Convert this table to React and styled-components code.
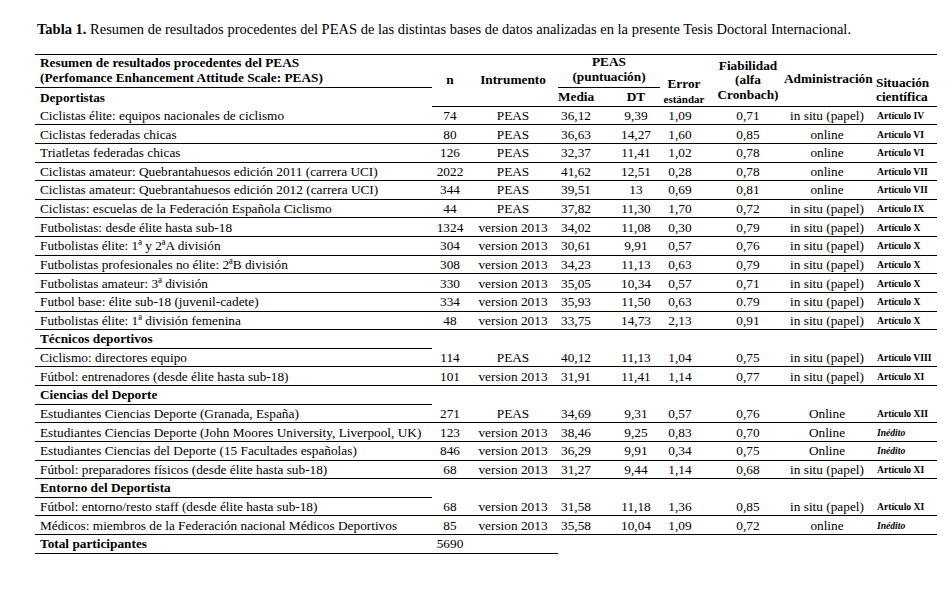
import React from 'react';
import styled, { createGlobalStyle, css } from 'styled-components';

const GlobalStyle = createGlobalStyle`
  html, body {
    margin: 0;
    padding: 0;
    background: #fff;
  }
  body {
    font-family: "Liberation Serif", "Times New Roman", serif;
    color: #000;
  }
`

const Page = styled.div`
  width: 949px;
  height: 603px;
  padding: 21px 0 0 35px;
  box-sizing: border-box;
  font-family: "Liberation Serif", "Times New Roman", serif;
`
const Caption = styled.p`
  margin: 0 0 17px 2px;
  font-size: 14.5px;
  line-height: 16px;
  b {
    font-weight: 700;
  }
`
const Table = styled.table`
  width: 902px;
  border-collapse: collapse;
  table-layout: fixed;
  border-top: 1px solid #000;
  font-family: "Liberation Serif", "Times New Roman", serif;
`
const line = css`border-bottom: 1px solid #000;`

const Th = styled.th`
  padding: 0;
  font-size: 13.3px;
  font-weight: 700;
  line-height: 14.5px;
  text-align: ${p => p.$align || 'center'};
  vertical-align: ${p => p.$valign || 'middle'};
  padding-left: ${p => p.$pl || 0}px;
  padding-right: ${p => p.$pr || 0}px;
  padding-bottom: ${p => p.$pb || 0}px;
  ${p => p.$line && line}
`
const Small = styled.span`
  display: block;
  font-size: 11px;
  line-height: 14px;
`
const Row = styled.tr`
  height: ${p => p.$h || 18.64}px;
`
const Td = styled.td`
  padding: 0;
  font-size: 13.3px;
  line-height: 15px;
  white-space: nowrap;
  text-align: center;
  vertical-align: middle;
  padding-left: ${p => p.$pl || 0}px;
  padding-right: ${p => p.$pr || 0}px;
  ${p => p.$line && line}
`
const Label = styled(Td)`
  text-align: left;
  padding-left: 5px;
  font-weight: ${p => p.$bold ? 700 : 400};
`
const Source = styled(Td)`
  text-align: left;
  padding-left: 7px;
  font-size: 9.6px;
  font-weight: 700;
  font-style: ${p => p.$italic ? 'italic' : 'normal'};
`

const sections = [
  {
    title: 'Deportistas',
    rows: [
      ['Ciclistas élite: equipos nacionales de ciclismo', '74', 'PEAS', '36,12', '9,39', '1,09', '0,71', 'in situ (papel)', 'Artículo IV'],
      ['Ciclistas federadas chicas', '80', 'PEAS', '36,63', '14,27', '1,60', '0,85', 'online', 'Artículo VI'],
      ['Triatletas federadas chicas', '126', 'PEAS', '32,37', '11,41', '1,02', '0,78', 'online', 'Artículo VI'],
      ['Ciclistas amateur: Quebrantahuesos edición 2011 (carrera UCI)', '2022', 'PEAS', '41,62', '12,51', '0,28', '0,78', 'online', 'Artículo VII'],
      ['Ciclistas amateur: Quebrantahuesos edición 2012 (carrera UCI)', '344', 'PEAS', '39,51', '13', '0,69', '0,81', 'online', 'Artículo VII'],
      ['Ciclistas: escuelas de la Federación Española Ciclismo', '44', 'PEAS', '37,82', '11,30', '1,70', '0,72', 'in situ (papel)', 'Artículo IX'],
      ['Futbolistas: desde élite hasta sub-18', '1324', 'version 2013', '34,02', '11,08', '0,30', '0,79', 'in situ (papel)', 'Artículo X'],
      ['Futbolistas élite: 1ª y 2ªA división', '304', 'version 2013', '30,61', '9,91', '0,57', '0,76', 'in situ (papel)', 'Artículo X'],
      ['Futbolistas profesionales no élite: 2ªB división', '308', 'version 2013', '34,23', '11,13', '0,63', '0,79', 'in situ (papel)', 'Artículo X'],
      ['Futbolistas amateur: 3ª división', '330', 'version 2013', '35,05', '10,34', '0,57', '0,71', 'in situ (papel)', 'Artículo X'],
      ['Futbol base: élite sub-18 (juvenil-cadete)', '334', 'version 2013', '35,93', '11,50', '0,63', '0.79', 'in situ (papel)', 'Artículo X'],
      ['Futbolistas élite: 1ª división femenina', '48', 'version 2013', '33,75', '14,73', '2,13', '0,91', 'in situ (papel)', 'Artículo X'],
    ],
  },
  {
    title: 'Técnicos deportivos',
    rows: [
      ['Ciclismo: directores equipo', '114', 'PEAS', '40,12', '11,13', '1,04', '0,75', 'in situ (papel)', 'Artículo VIII'],
      ['Fútbol: entrenadores (desde élite hasta sub-18)', '101', 'version 2013', '31,91', '11,41', '1,14', '0,77', 'in situ (papel)', 'Artículo XI'],
    ],
  },
  {
    title: 'Ciencias del Deporte',
    rows: [
      ['Estudiantes Ciencias Deporte (Granada, España)', '271', 'PEAS', '34,69', '9,31', '0,57', '0,76', 'Online', 'Artículo XII'],
      ['Estudiantes Ciencias Deporte (John Moores University, Liverpool, UK)', '123', 'version 2013', '38,46', '9,25', '0,83', '0,70', 'Online', 'Inédito'],
      ['Estudiantes Ciencias del Deporte (15 Facultades españolas)', '846', 'version 2013', '36,29', '9,91', '0,34', '0,75', 'Online', 'Inédito'],
      ['Fútbol: preparadores físicos (desde élite hasta sub-18)', '68', 'version 2013', '31,27', '9,44', '1,14', '0,68', 'in situ (papel)', 'Artículo XI'],
    ],
  },
  {
    title: 'Entorno del Deportista',
    rows: [
      ['Fútbol: entorno/resto staff (desde élite hasta sub-18)', '68', 'version 2013', '31,58', '11,18', '1,36', '0,85', 'in situ (papel)', 'Artículo XI'],
      ['Médicos: miembros de la Federación nacional Médicos Deportivos', '85', 'version 2013', '35,58', '10,04', '1,09', '0,72', 'online', 'Inédito'],
    ],
  },
]

// column widths, left to right
const widths = [397, 36, 90, 46, 56, 52, 72, 86, 67];

function DataRow({ r }) {
  const [label, n, instr, media, dt, err, fiab, admin, src] = r;
  return (
    <Row>
      <Label $line>{label}</Label>
      <Td $line>{n}</Td>
      <Td $line>{instr}</Td>
      <Td $line $pr={10}>{media}</Td>
      <Td $line $pl={8}>{dt}</Td>
      <Td $line $pr={12}>{err}</Td>
      <Td $line>{fiab}</Td>
      <Td $line>{admin}</Td>
      <Source $line $italic={src === 'Inédito'}>{src}</Source>
    </Row>
  )
}

function SectionRow({ title }) {
  return (
    <Row>
      <Label $bold $line>{title}</Label>
      {widths.slice(1).map((w, i) => <Td key={i} />)}
    </Row>
  )
}

export default function App() {
  const [first, ...rest] = sections;
  return (
    <Page>
      <GlobalStyle />
      <Caption><b>Tabla 1.</b> Resumen de resultados procedentes del PEAS de las distintas bases de datos analizadas en la presente Tesis Doctoral Internacional.</Caption>
      <Table>
        <colgroup>
          {widths.map((w, i) => <col key={i} style={{ width: w }} />)}
        </colgroup>
        <thead>
          <Row $h={31}>
            <Th $align="left" $valign="bottom" $pl={5} $pb={2} $line>
              Resumen de resultados procedentes del PEAS<br />
              (Perfomance Enhancement Attitude Scale: PEAS)
            </Th>
            <Th rowSpan={2} $line>n</Th>
            <Th rowSpan={2} $line>Intrumento</Th>
            <Th colSpan={2} $valign="bottom" $pb={3} $line>PEAS<br />(puntuación)</Th>
            <Th rowSpan={2} $valign="bottom" $pb={0} $pr={4} $line>
              Error<Small>estándar</Small>
            </Th>
            <Th rowSpan={2} $line>Fiabilidad<br />(alfa<br />Cronbach)</Th>
            <Th rowSpan={2} $pb={2} $line>Administración</Th>
            <Th rowSpan={2} $align="left" $valign="bottom" $pl={6} $pb={1} $line>Situación<br />científica</Th>
          </Row>
          <Row>
            <Label $bold>{first.title}</Label>
            <Th $pr={10} $line>Media</Th>
            <Th $pl={8} $line>DT</Th>
          </Row>
        </thead>
        <tbody>
          {first.rows.map((r, i) => <DataRow key={i} r={r} />)}
          {rest.map(s => (
            <React.Fragment key={s.title}>
              <SectionRow title={s.title} />
              {s.rows.map((r, i) => <DataRow key={i} r={r} />)}
            </React.Fragment>
          ))}
          <Row>
            <Label $bold $line>Total participantes</Label>
            <Td $line>5690</Td>
            <Td $line />
            {widths.slice(3).map((w, i) => <Td key={i} />)}
          </Row>
        </tbody>
      </Table>
    </Page>
  )
}
